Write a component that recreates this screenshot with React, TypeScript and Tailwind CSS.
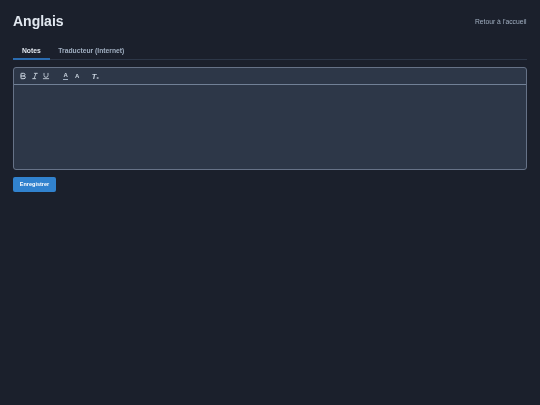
import { Italic, Bold, Underline } from 'lucide-react'

function ToolIcon({ children }: { children: React.ReactNode }) {
  return <span className="flex w-[11.5px] items-center justify-center text-[#cbd5e0]">{children}</span>
}

export default function App() {
  return (
    <div className="min-h-[405px] bg-[#1b202c] pt-[13px] pr-[13.5px] pl-[13px] font-['Liberation_Sans',sans-serif] text-[#e2e8f0] antialiased">
      {/* Header */}
      <header className="flex items-center justify-between will-change-transform">
        <h1 className="text-[14px] leading-[17px] font-bold">Anglais</h1>
        <a className="text-[6.75px] leading-[10px] text-[#a0aec0]">Retour à l'accueil</a>
      </header>

      {/* Tabs */}
      <nav className="mt-[12px] flex border-b border-[#2d3748] text-[6.75px] font-bold will-change-transform">
        <button className="-mb-px border-b-2 border-[#2b6cb0] px-[9px] pt-[4px] pb-[3px] leading-[9px] text-[#e2e8f0]">
          Notes
        </button>
        <button className="-mb-px border-b-2 border-transparent px-[8.5px] pt-[4px] pb-[3px] leading-[9px] text-[#a0aec0]">
          Traducteur (Internet)
        </button>
      </nav>

      {/* Editor */}
      <div className="mt-[7px] h-[103px] overflow-hidden rounded-[3px] border border-[#667287] bg-[#2d3748]">
        <div className="flex h-[17px] items-center border-b-[1.5px] border-[#718096] pl-[3.5px] will-change-transform">
          <ToolIcon><Bold size={8} strokeWidth={3} /></ToolIcon>
          <ToolIcon><Italic size={8} strokeWidth={2.5} /></ToolIcon>
          <ToolIcon><Underline size={8} strokeWidth={2.5} /></ToolIcon>
          <span className="w-[8px]" />
          <ToolIcon>
            <span className="border-b border-[#a0aec0] px-[0.5px] text-[6px] leading-[6.5px] font-bold">A</span>
          </ToolIcon>
          <ToolIcon><span className="text-[6px] leading-[6.5px] font-bold">A</span></ToolIcon>
          <span className="w-[6.5px]" />
          <ToolIcon>
            <span className="text-[7.5px] leading-[7px] font-bold italic">
              T<span className="text-[4px] leading-none not-italic">x</span>
            </span>
          </ToolIcon>
        </div>
      </div>

      <button className="mt-[7px] flex h-[14.5px] w-[43px] items-center justify-center rounded-[2px] bg-[#3182ce] text-[5.5px] font-bold text-white will-change-transform">
        Enregistrer
      </button>
    </div>
  )
}
